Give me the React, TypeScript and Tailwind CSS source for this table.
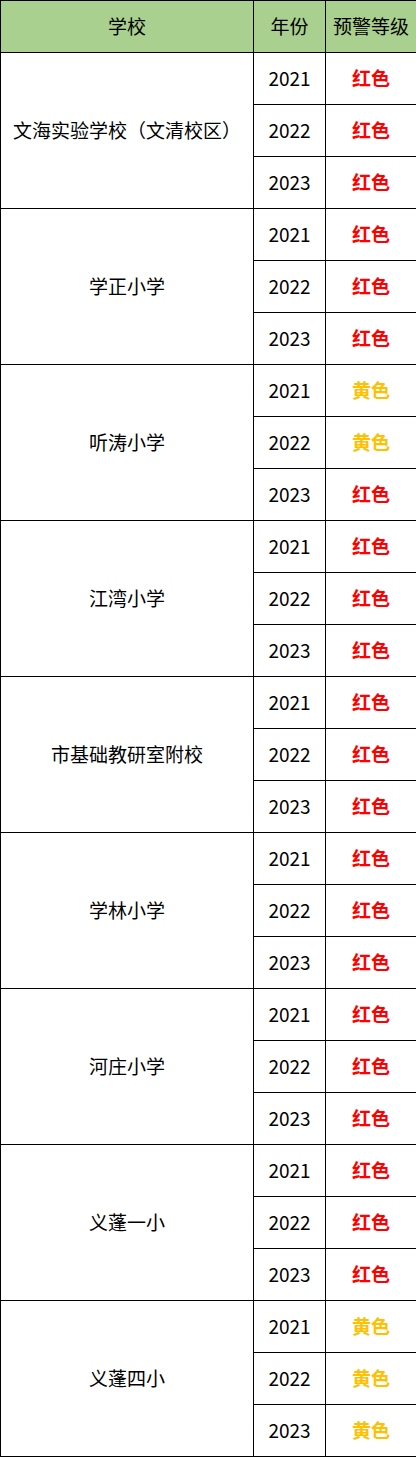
import React from "react";

const schools: { name: string; levels: ("红" | "黄")[] }[] = [
  { name: "文海实验学校（文清校区）", levels: ["红", "红", "红"] },
  { name: "学正小学", levels: ["红", "红", "红"] },
  { name: "听涛小学", levels: ["黄", "黄", "红"] },
  { name: "江湾小学", levels: ["红", "红", "红"] },
  { name: "市基础教研室附校", levels: ["红", "红", "红"] },
  { name: "学林小学", levels: ["红", "红", "红"] },
  { name: "河庄小学", levels: ["红", "红", "红"] },
  { name: "义蓬一小", levels: ["红", "红", "红"] },
  { name: "义蓬四小", levels: ["黄", "黄", "黄"] },
];

const years = ["2021", "2022", "2023"];

export default function App() {
  return (
    <div
      className="w-[416px] bg-white"
      style={{ fontFamily: '"Noto Sans CJK SC", "Noto Sans", sans-serif' }}
    >
      <table className="w-[416px] table-fixed border-collapse text-[19px] leading-none text-black">
        <colgroup>
          <col className="w-[253px]" />
          <col className="w-[72px]" />
          <col className="w-[91px]" />
        </colgroup>
        <thead>
          <tr className="h-[52px] bg-[#a9d08e]">
            <th className="border border-black p-0 pb-[3px] text-center font-normal">学校</th>
            <th className="border border-black p-0 pb-[3px] text-center font-normal">年份</th>
            <th className="border border-black p-0 pb-[3px] text-center font-normal">预警等级</th>
          </tr>
        </thead>
        <tbody>
          {schools.map((s) =>
            years.map((y, i) => (
              <tr key={s.name + y} className="h-[52px]">
                {i === 0 && (
                  <td rowSpan={3} className="border border-black p-0 pb-[3px] text-center">
                    {s.name}
                  </td>
                )}
                <td className="border border-black p-0 pb-[3px] text-center">{y}</td>
                <td
                  className={
                    "border border-black p-0 pb-[3px] text-center font-bold " +
                    (s.levels[i] === "红" ? "text-[#ff0000]" : "text-[#ffc000]")
                  }
                >
                  {s.levels[i] === "红" ? "红色" : "黄色"}
                </td>
              </tr>
            ))
          )}
        </tbody>
      </table>
    </div>
  );
}
